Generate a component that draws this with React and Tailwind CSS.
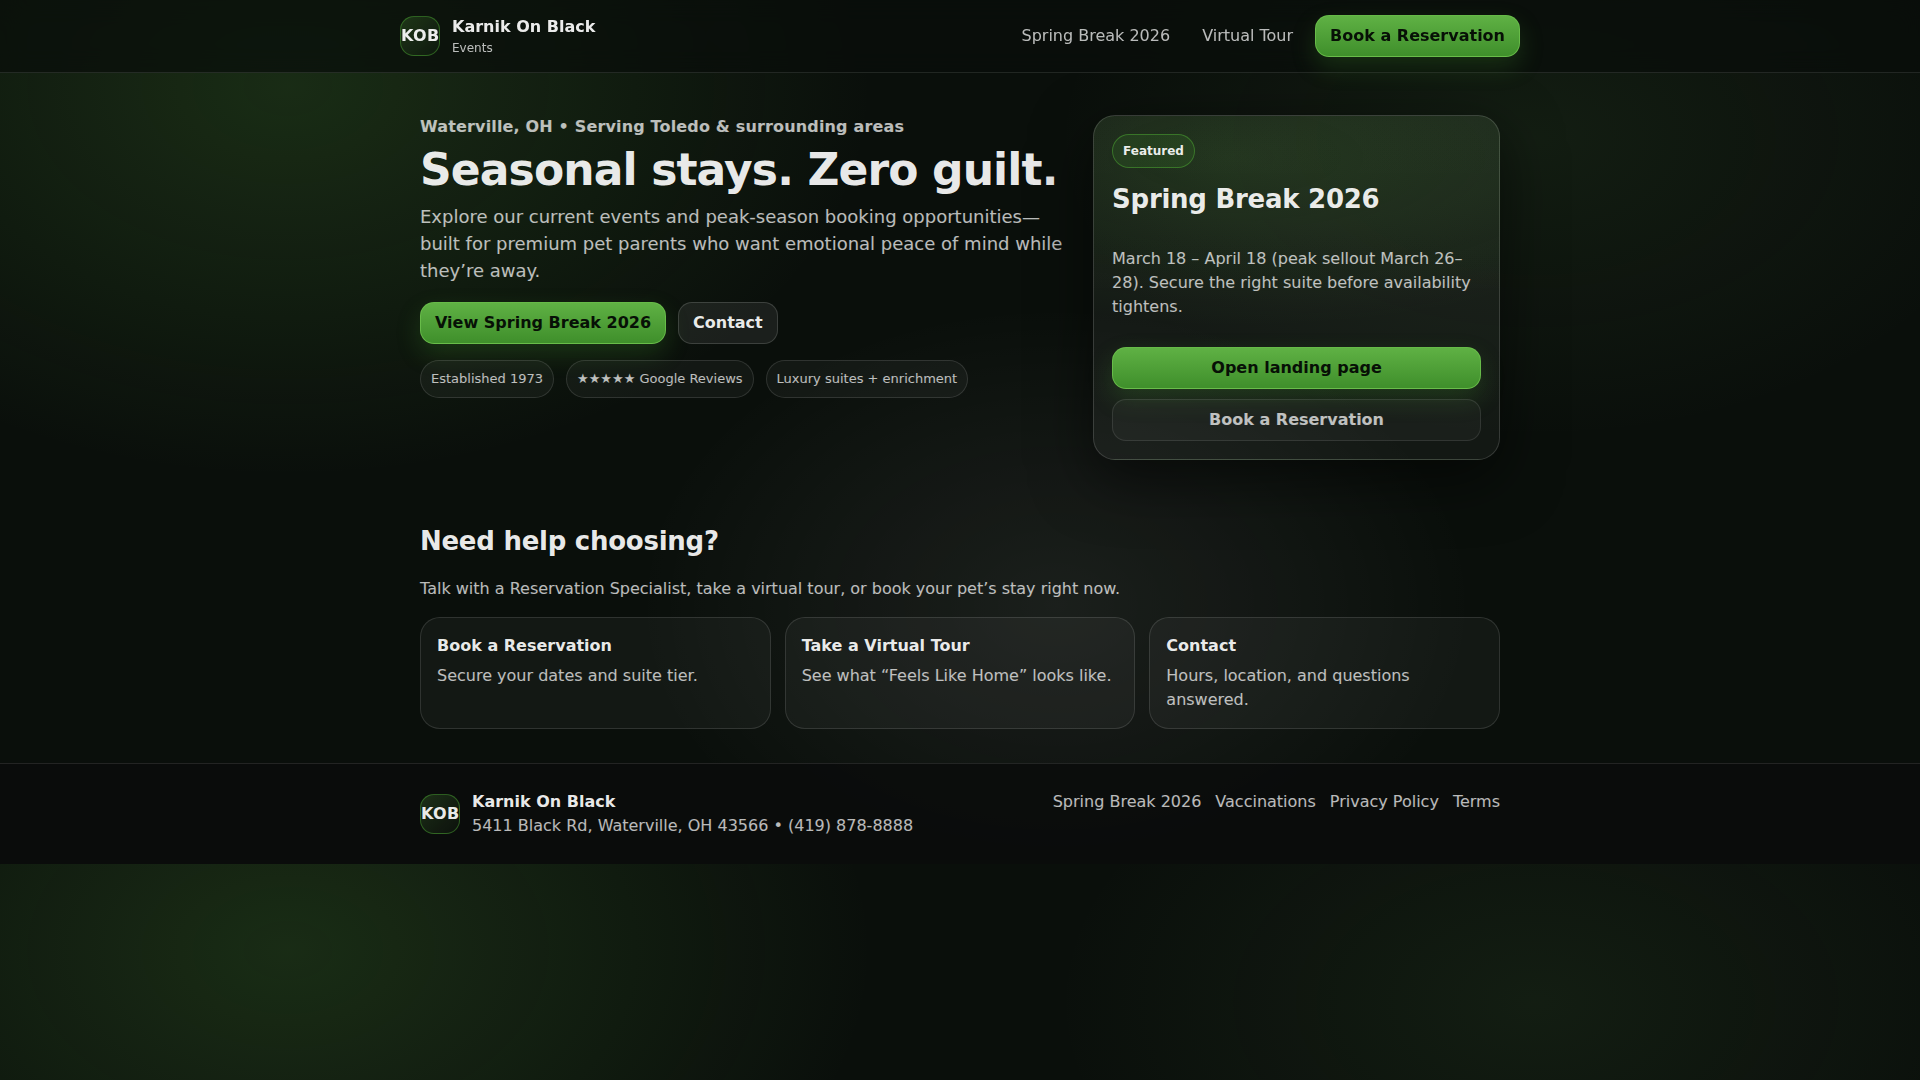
import { clsx } from 'clsx';

const navLinks = ['Spring Break 2026', 'Virtual Tour'];

const badges = ['Established 1973', '★★★★★ Google Reviews', 'Luxury suites + enrichment'];

const helpCards = [
  { title: 'Book a Reservation', text: 'Secure your dates and suite tier.' },
  { title: 'Take a Virtual Tour', text: 'See what “Feels Like Home” looks like.' },
  { title: 'Contact', text: 'Hours, location, and questions answered.' },
];

const footerLinks = ['Spring Break 2026', 'Vaccinations', 'Privacy Policy', 'Terms'];

function Button({ variant = 'primary', className, children }) {
  return (
    <a
      href="#"
      className={clsx(
        'inline-flex items-center justify-center rounded-[14px] border px-3.5 py-2 font-bold leading-6',
        variant === 'primary' &&
          'border-[#6abf4b]/90 bg-linear-to-b from-[#5fb144] to-[#3f8f2b] text-[#071006] shadow-[0_10px_24px_rgba(74,163,50,0.22)]',
        variant === 'secondary' && 'border-white/15 bg-white/7 text-white/92',
        variant === 'ghost' && 'border-white/10 bg-white/3 text-white/72',
        className
      )}
    >
      {children}
    </a>
  );
}

function Logo() {
  return (
    <div className="grid size-10 shrink-0 place-items-center rounded-[14px] border border-[#4aa332]/50 bg-linear-to-br from-[#5fb144]/22 to-[#5fb144]/3 font-bold tracking-[0.02em]">
      KOB
    </div>
  );
}

function Header() {
  return (
    <header className="border-b border-white/10 bg-[#090d0a]/70 backdrop-blur-md">
      <div className="mx-auto flex max-w-[1120px] items-center justify-between py-[15px]">
        <a href="#" className="flex items-center gap-3">
          <Logo />
          <div>
            <div className="font-bold leading-6">Karnik On Black</div>
            <div className="text-xs leading-[18px] text-white/72">Events</div>
          </div>
        </a>
        <nav className="flex items-center gap-3">
          {navLinks.map((link) => (
            <a key={link} href="#" className="px-2.5 text-white/72">
              {link}
            </a>
          ))}
          <Button>Book a Reservation</Button>
        </nav>
      </div>
    </header>
  );
}

function FeaturedCard() {
  return (
    <aside className="rounded-[22px] border border-white/15 bg-[radial-gradient(700px_260px_at_35%_12%,rgba(90,172,62,0.16),transparent_65%),linear-gradient(180deg,rgba(255,255,255,0.05),rgba(255,255,255,0.04))] p-[18px] shadow-[0_18px_60px_rgba(0,0,0,0.55)]">
      <span className="inline-block rounded-full border border-[#4aa332]/55 bg-[#4aa332]/14 px-2.5 py-[7px] align-top text-xs font-bold leading-[18px]">
        Featured
      </span>
      <h2 className="mt-3 text-[26px] font-bold leading-[39px] tracking-[-0.01em]">Spring Break 2026</h2>
      <p className="mt-7 text-white/72">
        March 18 – April 18 (peak sellout March 26–28). Secure the right suite before availability tightens.
      </p>
      <div className="mt-7 flex flex-col gap-2.5">
        <Button>Open landing page</Button>
        <Button variant="ghost">Book a Reservation</Button>
      </div>
    </aside>
  );
}

function Hero() {
  return (
    <section className="grid grid-cols-[1.6fr_1fr] gap-[22px] pt-[42px]">
      <div>
        <p className="font-bold tracking-[0.01em] text-white/72">Waterville, OH • Serving Toledo &amp; surrounding areas</p>
        <h1 className="mt-2 text-[44px] font-bold leading-[46px] tracking-[-0.02em]">Seasonal stays. Zero guilt.</h1>
        <p className="mt-2.5 text-lg leading-[27px] text-white/72">
          Explore our current events and peak-season booking opportunities—built for premium pet parents who want
          emotional peace of mind while they’re away.
        </p>
        <div className="mt-[18px] flex flex-wrap gap-3">
          <Button>View Spring Break 2026</Button>
          <Button variant="secondary">Contact</Button>
        </div>
        <ul className="mt-4 flex flex-wrap gap-3">
          {badges.map((badge) => (
            <li
              key={badge}
              className="rounded-full border border-white/12 bg-white/4 px-2.5 py-2 text-[13px] leading-5 text-white/72"
            >
              {badge}
            </li>
          ))}
        </ul>
      </div>
      <FeaturedCard />
    </section>
  );
}

function HelpSection() {
  return (
    <section className="pt-[62px] pb-[34px]">
      <h2 className="text-[26px] font-bold leading-[39px] tracking-[-0.01em]">Need help choosing?</h2>
      <p className="mt-4 text-white/72">
        Talk with a Reservation Specialist, take a virtual tour, or book your pet’s stay right now.
      </p>
      <div className="mt-4 grid grid-cols-3 gap-3.5">
        {helpCards.map((card) => (
          <a key={card.title} href="#" className="block rounded-[20px] border border-white/12 bg-white/4 p-4">
            <h3 className="font-bold">{card.title}</h3>
            <p className="mt-1.5 text-white/72">{card.text}</p>
          </a>
        ))}
      </div>
    </section>
  );
}

function Footer() {
  return (
    <footer className="border-t border-white/10 bg-[#0a0b0b]/80">
      <div className="mx-auto flex max-w-[1120px] items-start justify-between px-5 py-[26px]">
        <div className="flex items-center gap-3">
          <Logo />
          <div>
            <div className="font-bold">Karnik On Black</div>
            <div className="text-white/72">5411 Black Rd, Waterville, OH 43566 • (419) 878-8888</div>
          </div>
        </div>
        <nav className="flex gap-3.5 text-white/72">
          {footerLinks.map((link) => (
            <a key={link} href="#">
              {link}
            </a>
          ))}
        </nav>
      </div>
    </footer>
  );
}

export default function App() {
  return (
    // the glow repeats every 864px so it carries on below the footer
    <div className="min-h-screen bg-[#0a0f0b] bg-[radial-gradient(900px_600px_at_15%_10%,rgba(95,177,68,0.18),transparent_65%),radial-gradient(800px_500px_at_80%_16%,rgba(110,170,90,0.09),transparent_60%),radial-gradient(700px_500px_at_55%_70%,rgba(255,245,255,0.07),transparent_60%)] bg-[length:100%_864px] font-['DejaVu_Sans',sans-serif] text-base leading-6 text-white/92">
      <Header />
      <main className="mx-auto max-w-[1120px] px-5">
        <Hero />
        <HelpSection />
      </main>
      <Footer />
    </div>
  );
}
